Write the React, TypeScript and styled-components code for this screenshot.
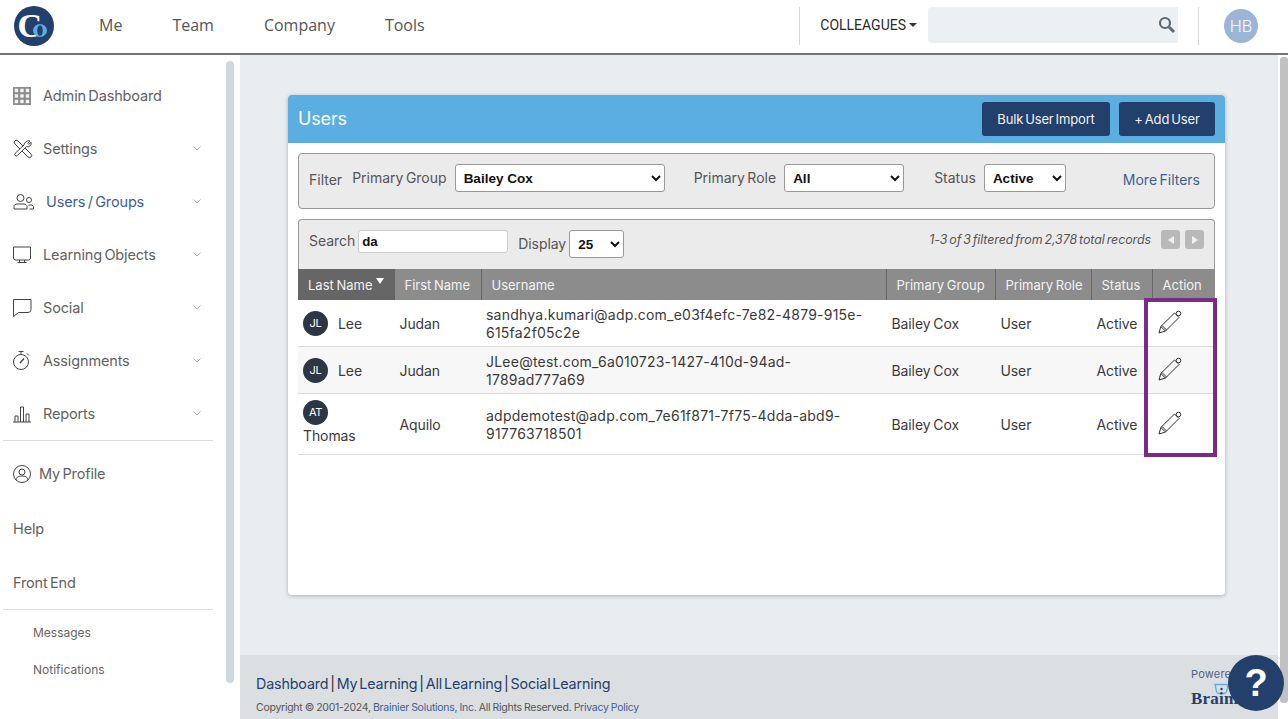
import React from "react";
import styled, { createGlobalStyle } from "styled-components";

const navy = "#233f6b";
const bodyFont = `Inter, "Liberation Sans", sans-serif`;

const GlobalStyle = createGlobalStyle`
  html, body {
    margin: 0;
    height: 100%;
    overflow: hidden;
    background: #fff;
  }
  * {
    box-sizing: border-box;
  }
`;

const Page = styled.div`
  position: relative;
  height: 719px;
  display: flex;
  flex-direction: column;
  overflow: hidden;
  font-family: ${bodyFont};
  letter-spacing: -0.15px;
  word-spacing: -1.5px;
`;

const TopBar = styled.header`
  flex: 0 0 55px;
  display: flex;
  align-items: center;
  padding: 0 30px 2px 14px;
  background: #fff;
  border-bottom: 2px solid #757575;
`;

const MainNav = styled.nav`
  display: flex;
  gap: 50px;
  margin: 0 0 2px 45px;
  flex: 1;
  font-family: "Open Sans", sans-serif;
  font-size: 16px;
  color: #555;
  letter-spacing: 0;
  word-spacing: 0;
`;

const Divider = styled.div`
  width: 1px;
  height: 38px;
  background: #d8d8d8;
`;

const ColleaguesMenu = styled.div`
  display: flex;
  align-items: center;
  gap: 3px;
  margin: 0 11px 1px 20px;
  font-family: Roboto, sans-serif;
  font-size: 14px;
  color: #2b2b2b;
  letter-spacing: 0;
  &::after {
    content: "";
    border-top: 4px solid #333;
    border-left: 4px solid transparent;
    border-right: 4px solid transparent;
  }
`;

const SearchBox = styled.div`
  width: 250px;
  height: 36px;
  margin: 0 20px 2px 0;
  padding-right: 2px;
  display: flex;
  align-items: center;
  justify-content: flex-end;
  background: #ecf0f3;
  border-radius: 4px 0 0 4px;
`;

const Avatar = styled.div`
  width: 34px;
  height: 34px;
  margin-left: 25px;
  display: flex;
  align-items: center;
  justify-content: center;
  border-radius: 50%;
  background: #9ab5d6;
  color: #fff;
  font-family: Roboto, sans-serif;
  font-size: 17px;
  font-weight: 300;
  letter-spacing: 0;
`;

const Body = styled.div`
  flex: 1;
  display: flex;
  min-height: 0;
`;

const Sidebar = styled.aside`
  flex: 0 0 240px;
  display: flex;
  padding: 6px 6px 0 3px;
  background: #fff;
`;

const SideList = styled.div`
  width: 210px;
  padding-top: 8px;
`;

const SideThumb = styled.div`
  width: 8px;
  height: 622px;
  margin-left: 13px;
  border-radius: 4px;
  background: #cfd8dc;
`;

const SideItem = styled.div<{ $active?: boolean; $gap?: number; $height?: number; $push?: number }>`
  height: ${(p) => p.$height ?? 53}px;
  display: flex;
  align-items: center;
  gap: ${(p) => p.$gap ?? 10}px;
  padding: ${(p) => p.$push ?? 0}px 12px 0 10px;
  font-size: 14.5px;
  color: ${(p) => (p.$active ? "#3f5f8f" : "#626262")};
`;

const SideLabel = styled.span`
  flex: 1;
`;

const SideRule = styled.hr`
  margin: 0;
  border: 0;
  border-top: 1px solid #dcdcdc;
`;

const SubList = styled.div`
  padding-top: 4px;
`;

const SubItem = styled.div`
  height: 37px;
  display: flex;
  align-items: center;
  padding-left: 30px;
  font-size: 12px;
  color: #666;
  letter-spacing: 0;
`;

const Main = styled.main`
  flex: 1;
  display: flex;
  flex-direction: column;
  background: #e9edf0;
  min-width: 0;
`;

const Content = styled.div`
  flex: 1;
  padding: 40px 53px 0 48px;
`;

const Card = styled.section`
  height: 500px;
  background: #fff;
  border-radius: 4px;
  box-shadow: 0 1px 4px rgba(0, 0, 0, 0.25);
  overflow: hidden;
`;

const CardHead = styled.div`
  height: 48px;
  display: flex;
  align-items: center;
  justify-content: space-between;
  padding: 0 10px;
  background: #5baee2;
`;

const CardTitle = styled.h1`
  margin: 0 0 2px;
  font-size: 18px;
  font-weight: 400;
  color: #fff;
`;

const HeadButtons = styled.div`
  display: flex;
  gap: 9px;
`;

const NavyButton = styled.button<{ $width: number }>`
  width: ${(p) => p.$width}px;
  height: 34px;
  padding: 0;
  border: 0;
  border-radius: 3px;
  background: ${navy};
  color: #f2f2f2;
  font-family: ${bodyFont};
  font-size: 13px;
  letter-spacing: -0.15px;
  word-spacing: -1.5px;
`;

const CardBody = styled.div`
  padding: 10px 10px 0;
`;

const FilterBar = styled.div`
  height: 56px;
  display: flex;
  align-items: center;
  padding: 0 14px 6px 10px;
  background: #ebebeb;
  border: 1px solid #999;
  border-radius: 4px;
  font-size: 14px;
  letter-spacing: 0;
  color: #555;
`;

const FilterTitle = styled.span`
  position: relative;
  top: 1px;
  margin-right: 10px;
`;

const FilterLabel = styled.span<{ $left?: number }>`
  position: relative;
  top: -1px;
  margin-left: ${(p) => p.$left ?? 0}px;
  margin-right: 8px;
`;

const MoreFilters = styled.a`
  position: relative;
  top: 1px;
  margin-left: auto;
  color: #3f5f8f;
`;

const Select = styled.select<{ $width: number; $height?: number }>`
  width: ${(p) => p.$width}px;
  height: ${(p) => p.$height ?? 28}px;
  padding: 0 4px;
  background: #fff;
  border: 1px solid #999;
  border-radius: 3px;
  color: #111;
  font-family: "Liberation Sans", Arial, sans-serif;
  font-size: 13.5px;
  font-weight: 700;
`;

const TableWrap = styled.div`
  margin-top: 10px;
`;

const SearchBar = styled.div`
  height: 50px;
  display: flex;
  align-items: flex-start;
  padding: 10px 10px 0 10px;
  background: #ebebeb;
  border: 1px solid #999;
  border-bottom: 0;
  border-radius: 4px 4px 0 0;
  font-size: 14px;
  letter-spacing: -0.05px;
  color: #555;
`;

const SearchLabel = styled.span`
  margin-right: 3px;
  line-height: 21px;
`;

const SearchInput = styled.input`
  width: 150px;
  height: 23px;
  padding: 0 3px;
  border: 1px solid #ccc;
  border-radius: 3px;
  background: #fff;
  color: #111;
  font-family: "Liberation Sans", Arial, sans-serif;
  font-size: 13.3px;
  font-weight: 700;
`;

const DisplayLabel = styled.span`
  margin: 3px 3px 0 10px;
  line-height: 21px;
`;

const RecordCount = styled.em`
  margin-left: auto;
  margin-right: 5px;
  font-size: 12.4px;
  line-height: 20px;
  color: #555;
`;

const PagerButton = styled.span`
  width: 19px;
  height: 19px;
  margin-left: 5px;
  display: flex;
  align-items: center;
  justify-content: center;
  border-radius: 3px;
  background: #b9b9b9;
`;

const PagerArrow = styled.i<{ $left?: boolean }>`
  border-top: 4px solid transparent;
  border-bottom: 4px solid transparent;
  border-${(p) => (p.$left ? "right" : "left")}: 6px solid #f0f0f0;
`;

const Table = styled.table`
  width: 917px;
  table-layout: fixed;
  border-collapse: collapse;
  font-size: 14px;
  color: #3a3a3a;
`;

const HeadCell = styled.th<{ $sorted?: boolean }>`
  height: 31px;
  padding: 0 0 0 10px;
  text-align: left;
  white-space: nowrap;
  font-weight: 400;
  font-size: 13px;
  letter-spacing: 0;
  word-spacing: -1px;
  color: #f2f2f2;
  background: ${(p) => (p.$sorted ? "#666" : "#8c8c8c")};
  border-left: 1px solid #666;
  &:first-child {
    border-left: 0;
  }
`;

const SortMark = styled.i`
  display: inline-block;
  margin-left: 4px;
  vertical-align: 6px;
  border-top: 6px solid #fff;
  border-left: 4px solid transparent;
  border-right: 4px solid transparent;
`;

const Row = styled.tr<{ $alt?: boolean; $height: number }>`
  height: ${(p) => p.$height}px;
  background: ${(p) => (p.$alt ? "#f7f7f7" : "#fff")};
  border-bottom: 1px solid #dcdcdc;
`;

const Cell = styled.td`
  padding: 2px 5px 0 5.5px;
  line-height: 18px;
  letter-spacing: -0.1px;
  word-spacing: -1px;
`;

const NameCell = styled(Cell)`
  padding: 2px 0 0 5px;
  line-height: 21px;
`;

const NameBlock = styled.div<{ $stack?: boolean }>`
  display: flex;
  flex-direction: ${(p) => (p.$stack ? "column" : "row")};
  align-items: ${(p) => (p.$stack ? "flex-start" : "center")};
  gap: ${(p) => (p.$stack ? 0 : 10)}px;
  margin-top: ${(p) => (p.$stack ? -4 : 0)}px;
`;

const UserCell = styled(Cell)`
  padding: 2px 14px 0 5px;
  letter-spacing: 0.23px;
  word-spacing: 0;
  overflow-wrap: anywhere;
`;

const Initials = styled.span`
  display: flex;
  flex: 0 0 25px;
  width: 25px;
  height: 25px;
  align-items: center;
  justify-content: center;
  border-radius: 50%;
  background: #2e3646;
  color: #fff;
  font-size: 11px;
  letter-spacing: -0.3px;
`;

const Frame = styled.div`
  position: absolute;
  left: 1144px;
  top: 298px;
  width: 73px;
  height: 159px;
  border: 4px solid #7b2a86;
  pointer-events: none;
`;

const Footer = styled.footer`
  flex: 0 0 64px;
  display: flex;
  justify-content: space-between;
  padding: 20px 0 0 16px;
  background: #dcdfe2;
  overflow: hidden;
`;

const FooterLinks = styled.div`
  font-size: 14.3px;
  letter-spacing: -0.15px;
  word-spacing: -2px;
  color: #2b2b2b;
`;

const FooterLink = styled.a`
  color: ${navy};
`;

const Copyright = styled.div`
  margin-top: 9px;
  font-size: 10.5px;
  letter-spacing: -0.26px;
  word-spacing: -0.5px;
  color: #555;
`;

const CopyLink = styled.a`
  color: #3f5f8f;
`;

const Powered = styled.div`
  width: 87px;
  margin-top: -8px;
  font-size: 11px;
  letter-spacing: 0.2px;
  color: #4e6487;
  white-space: nowrap;
  overflow: hidden;
`;

const BrandMark = styled.div`
  height: 12px;
  margin: 2px 0 0 23px;
`;

const BrandName = styled.div`
  margin-top: -6px;
  font-family: "Liberation Serif", serif;
  font-size: 17px;
  font-weight: 700;
  letter-spacing: 0.2px;
  color: ${navy};
`;

const ScrollTrack = styled.div`
  flex: 0 0 10px;
  padding: 2px 0 0 2px;
  background: #fff;
`;

const ScrollThumb = styled.div`
  height: 646px;
  border-radius: 3px;
  background: #c1c1c1;
`;

const HelpBubble = styled.div`
  position: absolute;
  left: 1228px;
  top: 655px;
  width: 56px;
  height: 56px;
  display: flex;
  align-items: center;
  justify-content: center;
  border-radius: 50%;
  background: ${navy};
  color: #fff;
  font-family: "Liberation Sans", Arial, sans-serif;
  font-size: 38px;
  font-weight: 700;
`;

type IconProps = { children: React.ReactNode; w?: number; h?: number };

const Icon: React.FC<IconProps> = ({ children, w = 20, h = 20 }) => (
  <svg width={w} height={h} viewBox={`0 0 ${w} ${h}`} fill="none" stroke="#444" strokeWidth="1">
    {children}
  </svg>
);

const Logo = () => (
  <svg width="40" height="40" viewBox="0 0 40 40">
    <circle cx="20" cy="20" r="20" fill={navy} />
    <text x="3.5" y="31" fontFamily="Liberation Serif, serif" fontWeight="700" fontSize="34" fill="#fff">C</text>
    <ellipse cx="26" cy="24.5" rx="7" ry="6.5" fill="#5baee2" />
    <ellipse cx="26" cy="24.5" rx="2.800" ry="5.200" fill={navy} />
  </svg>
);

const GridIcon = () => (
  <svg width="20" height="20" viewBox="0 0 20 20">
    <rect x="0" y="1" width="18" height="18" fill="#8c8c8c" />
    {[0, 1, 2].map((r) =>
      [0, 1, 2].map((c) => (
        <rect key={`${r}${c}`} x={1.75 + c * 5.5} y={2.75 + r * 5.5} width="3.4" height="3.4" fill="#f4f4f4" />
      ))
    )}
  </svg>
);

const ToolsIcon = () => (
  <Icon>
    <path d="M1 3l2-2 2 1 13 13a2 2 0 0 1-3 3L2 5z" />
    <path d="M13 3a3.500 3.500 0 0 1 4-1l-2.200 2.400 1 1L18 3.200a3.500 3.500 0 0 1-4.600 4.400L4.500 16.400a1.500 1.500 0 0 1-2.400-2L11 6a3 3 0 0 1 2-3z" fill="#fff" />
  </Icon>
);

const UsersIcon = () => (
  <Icon w={21} h={18}>
    <circle cx="7.500" cy="5" r="3.500" />
    <path d="M1 16v-2.500c0-1.500 1.500-2.500 3-2.500h7c1.500 0 3 1 3 2.500V16z" />
    <circle cx="16" cy="7" r="2.500" />
    <path d="M15.500 12h2.500c1.500 0 2.500 1 2.500 2v2h-4" />
  </Icon>
);

const MonitorIcon = () => (
  <Icon h={18}>
    <path d="M0.500 1h17v11a2 2 0 0 1-2 2h-13a2 2 0 0 1-2-2z" />
    <path d="M6.500 14v2M11.500 14v2M4.500 16.500h9" />
  </Icon>
);

const ChatIcon = () => (
  <Icon>
    <path d="M0.500 1.500h17.500v10a3 3 0 0 1-3 3H5.500L0.500 18.500z" />
  </Icon>
);

const TimerIcon = () => (
  <Icon h={21}>
    <circle cx="8" cy="12" r="7.500" />
    <path d="M5.500 1.500h5M8 1.500v3M14 3.500l2 2" />
    <path d="M7 13l4-4.500" strokeWidth="1.500" />
  </Icon>
);

const BarsIcon = () => (
  <Icon h={18}>
    <path d="M0 17h18M2 17v-6h3v6M7.500 17V2h3v15M13 17v-8h3v8" />
  </Icon>
);

const ProfileIcon = () => (
  <Icon w={18} h={18}>
    <circle cx="9" cy="9" r="8.500" />
    <circle cx="9" cy="7" r="3" />
    <path d="M3 15c0-3 3-4 6-4s6 1 6 4" />
  </Icon>
);

const Chevron = () => (
  <svg width="8" height="5" viewBox="0 0 8 5" fill="none" stroke="#999" strokeWidth="0.8">
    <path d="M0.500 0.500L4 4l3.500-3.500" />
  </svg>
);

const SearchGlass = () => (
  <svg width="18" height="18" viewBox="0 0 18 18" fill="none" stroke="#606a75" strokeWidth="2.200">
    <circle cx="7" cy="7" r="5" />
    <path d="M11 11l5 5" strokeWidth="3" />
  </svg>
);

const Pencil = () => (
  <svg width="24" height="24" viewBox="0 0 24 24" fill="none" stroke="#2f2f2f" strokeWidth="1">
    <path d="M1 23l1.800-6.500L16.500 3l4.500 4.500L7.500 21z" />
    <path d="M2.800 16.500L7.500 21M4 15.500l4.500 4.500" />
    <circle cx="20.500" cy="3.500" r="2.300" />
  </svg>
);

const GlassesMark = () => (
  <svg width="24" height="12" viewBox="0 0 24 12" fill="none" stroke="#5baee2" strokeWidth="1.300">
    <path d="M1 1.500h13l-1.500 7a3 3 0 0 1-3 2h-4a3 3 0 0 1-3-2z" />
    <circle cx="7.500" cy="6" r="1.200" fill={navy} stroke="none" />
  </svg>
);

const menu = [
  { label: "Admin Dashboard", icon: <GridIcon /> },
  { label: "Settings", icon: <ToolsIcon />, more: true },
  { label: "Users / Groups", icon: <UsersIcon />, more: true, active: true, gap: 12 },
  { label: "Learning Objects", icon: <MonitorIcon />, more: true },
  { label: "Social", icon: <ChatIcon />, more: true },
  { label: "Assignments", icon: <TimerIcon />, more: true },
  { label: "Reports", icon: <BarsIcon />, more: true },
];

const users = [
  { initials: "JL", last: "Lee", first: "Judan", name: "sandhya.kumari@adp.com_e03f4efc-7e82-4879-915e-615fa2f05c2e", height: 46 },
  { initials: "JL", last: "Lee", first: "Judan", name: "JLee@test.com_6a010723-1427-410d-94ad-1789ad777a69", height: 47, alt: true },
  { initials: "AT", last: "Thomas", first: "Aquilo", name: "adpdemotest@adp.com_7e61f871-7f75-4dda-abd9-917763718501", height: 61, stack: true },
];

const App: React.FC = () => (
  <Page>
    <GlobalStyle />
    <TopBar>
      <Logo />
      <MainNav>
        <span>Me</span>
        <span>Team</span>
        <span>Company</span>
        <span>Tools</span>
      </MainNav>
      <Divider />
      <ColleaguesMenu>COLLEAGUES</ColleaguesMenu>
      <SearchBox>
        <SearchGlass />
      </SearchBox>
      <Divider />
      <Avatar>HB</Avatar>
    </TopBar>
    <Body>
      <Sidebar>
        <SideList>
          {menu.map((m) => (
            <SideItem key={m.label} $active={m.active} $gap={m.gap}>
              {m.icon}
              <SideLabel>{m.label}</SideLabel>
              {m.more && <Chevron />}
            </SideItem>
          ))}
          <SideRule />
          <SideItem $gap={8} $height={65}>
            <ProfileIcon />
            <SideLabel>My Profile</SideLabel>
          </SideItem>
          <SideItem $height={45}>Help</SideItem>
          <SideItem $height={58} $push={5}>Front End</SideItem>
          <SideRule />
          <SubList>
            <SubItem>Messages</SubItem>
            <SubItem>Notifications</SubItem>
          </SubList>
        </SideList>
        <SideThumb />
      </Sidebar>
      <Main>
        <Content>
          <Card>
            <CardHead>
              <CardTitle>Users</CardTitle>
              <HeadButtons>
                <NavyButton $width={128}>Bulk User Import</NavyButton>
                <NavyButton $width={96}>+ Add User</NavyButton>
              </HeadButtons>
            </CardHead>
            <CardBody>
              <FilterBar>
                <FilterTitle>Filter</FilterTitle>
                <FilterLabel>Primary Group</FilterLabel>
                <Select $width={210} defaultValue="Bailey Cox">
                  <option>Bailey Cox</option>
                </Select>
                <FilterLabel $left={29}>Primary Role</FilterLabel>
                <Select $width={120} defaultValue="All">
                  <option>All</option>
                </Select>
                <FilterLabel $left={30}>Status</FilterLabel>
                <Select $width={82} defaultValue="Active">
                  <option>Active</option>
                </Select>
                <MoreFilters>More Filters</MoreFilters>
              </FilterBar>
              <TableWrap>
                <SearchBar>
                  <SearchLabel>Search</SearchLabel>
                  <SearchInput defaultValue="da" />
                  <DisplayLabel>Display</DisplayLabel>
                  <Select $width={55} defaultValue="25">
                    <option>25</option>
                  </Select>
                  <RecordCount>1-3 of 3 filtered from 2,378 total records</RecordCount>
                  <PagerButton>
                    <PagerArrow $left />
                  </PagerButton>
                  <PagerButton>
                    <PagerArrow />
                  </PagerButton>
                </SearchBar>
                <Table>
                  <colgroup>
                    <col width="96" />
                    <col width="87" />
                    <col width="405" />
                    <col width="109" />
                    <col width="96" />
                    <col width="61" />
                    <col width="63" />
                  </colgroup>
                  <thead>
                    <tr>
                      <HeadCell $sorted>
                        Last Name
                        <SortMark />
                      </HeadCell>
                      <HeadCell>First Name</HeadCell>
                      <HeadCell>Username</HeadCell>
                      <HeadCell>Primary Group</HeadCell>
                      <HeadCell>Primary Role</HeadCell>
                      <HeadCell>Status</HeadCell>
                      <HeadCell>Action</HeadCell>
                    </tr>
                  </thead>
                  <tbody>
                    {users.map((u) => (
                      <Row key={u.name} $alt={u.alt} $height={u.height}>
                        <NameCell>
                          <NameBlock $stack={u.stack}>
                            <Initials>{u.initials}</Initials>
                            {u.last}
                          </NameBlock>
                        </NameCell>
                        <Cell>{u.first}</Cell>
                        <UserCell>{u.name}</UserCell>
                        <Cell>Bailey Cox</Cell>
                        <Cell>User</Cell>
                        <Cell>Active</Cell>
                        <Cell>
                          <Pencil />
                        </Cell>
                      </Row>
                    ))}
                  </tbody>
                </Table>
              </TableWrap>
            </CardBody>
          </Card>
        </Content>
        <Footer>
          <div>
            <FooterLinks>
              <FooterLink>Dashboard</FooterLink> | <FooterLink>My Learning</FooterLink> |{" "}
              <FooterLink>All Learning</FooterLink> | <FooterLink>Social Learning</FooterLink>
            </FooterLinks>
            <Copyright>
              Copyright © 2001-2024, <CopyLink>Brainier Solutions, Inc.</CopyLink> All Rights Reserved.{" "}
              <CopyLink>Privacy Policy</CopyLink>
            </Copyright>
          </div>
          <Powered>
            Powered by
            <BrandMark>
              <GlassesMark />
            </BrandMark>
            <BrandName>Brainier</BrandName>
          </Powered>
        </Footer>
      </Main>
      <ScrollTrack>
        <ScrollThumb />
      </ScrollTrack>
    </Body>
    <Frame />
    <HelpBubble>?</HelpBubble>
  </Page>
);

export default App;
